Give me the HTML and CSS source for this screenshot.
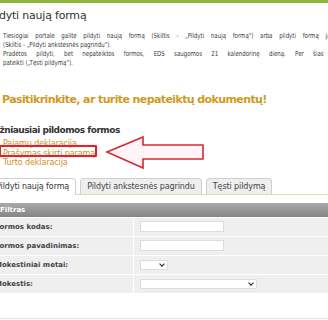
FILE: index.html
```html
<!DOCTYPE html>
<html lang="lt">
<head>
    <meta charset="UTF-8">
    <meta name="viewport" content="width=device-width, initial-scale=1.0">
    <title>Pildyti naują formą</title>
    <link rel="stylesheet" href="styles.css">
</head>
<body>
    <div class="top-bar"></div>
    <div class="page">
        <h1>Pildyti naują formą</h1>

        <div class="intro">
            <span class="line full first">Tiesiogiai portale galite pildyti naują formą (Skiltis - „Pildyti naują formą") arba pildyti formą jau</span>
            <span class="line">(Skiltis - „Pildyti ankstesnės pagrindu").</span>
            <span class="line full third">Pradėtos pildyti, bet nepateiktos formos, EDS saugomos 21 kalendorinę dieną. Per šias dienas</span>
            <span class="line">pateikti („Tęsti pildymą").</span>
        </div>

        <p class="notice">Pasitikrinkite, ar turite nepateiktų dokumentų!</p>

        <div class="popular">
            <h3>Dažniausiai pildomos formos</h3>
            <ul class="popular-list">
                <li><a href="#">Pajamų deklaracija</a></li>
                <li><a href="#">Prašymas skirti paramą</a></li>
                <li><a href="#">Turto deklaracija</a></li>
            </ul>
            <div class="highlight-box"></div>
            <svg class="highlight-arrow" width="110" height="40" viewBox="0 0 110 40">
                <polygon points="2,17 38,2 38,10 98,10 98,24 38,24 38,33" />
            </svg>
        </div>

        <div class="tabs">
            <div class="tab active">Pildyti naują formą</div>
            <div class="tab">Pildyti ankstesnės pagrindu</div>
            <div class="tab">Tęsti pildymą</div>
        </div>

        <div class="filter">
            <div class="filter-head">Filtras</div>
            <div class="filter-row">
                <label>Formos kodas:</label>
                <div class="field"><input type="text" class="input"></div>
            </div>
            <div class="filter-row">
                <label>Formos pavadinimas:</label>
                <div class="field"><input type="text" class="input"></div>
            </div>
            <div class="filter-row">
                <label>Mokestiniai metai:</label>
                <div class="field"><div class="select small"><span class="chev"></span></div></div>
            </div>
            <div class="filter-row">
                <label>Mokestis:</label>
                <div class="field"><div class="select wide"><span class="chev"></span></div></div>
            </div>
        </div>

        <div class="bottom-line"></div>
    </div>
</body>
</html>
```

FILE: styles.css
```css
* {
    margin: 0;
    padding: 0;
    box-sizing: border-box;
}

body {
    background: #fff;
    color: #333;
    font-family: 'DejaVu Sans', Verdana, sans-serif;
    overflow: hidden;
    width: 328px;
    height: 320px;
}

.top-bar {
    height: 3px;
    background: #8db53c;
}

.page {
    margin-left: -13px;
    width: 560px;
}

h1 {
    font-size: 11px;
    font-weight: normal;
    line-height: 14px;
    margin-top: 6px;
    color: #333;
    letter-spacing: -0.2px;
}

.intro {
    margin-top: 9px;
    margin-left: 16px;
    width: 480px;
    font-size: 7px;
    line-height: 9px;
    color: #3a3a3a;
    transform: scaleX(0.78);
    transform-origin: 0 0;
}

.intro .line {
    display: block;
    white-space: nowrap;
}

.intro .full {
    white-space: normal;
    text-align: justify;
    text-align-last: justify;
}

.intro .first {
    width: 424px;
}

.intro .third {
    width: 446px;
}

.notice {
    margin-top: 25px;
    padding-left: 15px;
    font-size: 11px;
    line-height: 14px;
    font-weight: bold;
    color: #cf9a22;
    letter-spacing: -0.6px;
}

.popular {
    position: relative;
    margin-top: 17px;
}

.popular h3 {
    font-size: 9px;
    line-height: 12px;
    font-weight: bold;
    color: #333;
    letter-spacing: -0.5px;
}

.popular-list {
    list-style: none;
    padding-left: 16px;
    margin-top: 3px;
}

.popular-list li {
    font-size: 8px;
    line-height: 9.5px;
    letter-spacing: -0.1px;
}

.popular-list a {
    color: #d0901e;
    text-decoration: none;
}

.highlight-box {
    position: absolute;
    left: 12px;
    top: 21px;
    width: 98px;
    height: 12px;
    border: 2px solid #d8262f;
    border-radius: 1px;
    box-shadow: 0 0 2px rgba(255, 150, 180, 0.6);
}

.highlight-arrow {
    position: absolute;
    left: 118px;
    top: 11px;
    overflow: visible;
}

.highlight-arrow polygon {
    fill: rgba(255, 235, 242, 0.5);
    stroke: #d42a33;
    stroke-width: 1.6;
    stroke-linejoin: miter;
}

.tabs {
    display: flex;
    gap: 4px;
    margin-top: 10px;
    padding-left: 2px;
    border-bottom: 1px solid #d9ddbd;
    height: 17px;
}

.tab {
    font-size: 8px;
    line-height: 15px;
    padding: 0 6px;
    border: 1px solid #cfcfcf;
    border-bottom: none;
    border-radius: 4px 4px 0 0;
    background: #efefef;
    color: #444;
    height: 16px;
    align-self: flex-end;
    letter-spacing: -0.1px;
}

.tab.active {
    background: #fff;
    height: 17px;
    margin-bottom: -1px;
    color: #333;
}

.filter {
    margin-top: 8px;
}

.filter-head {
    height: 14px;
    padding-left: 13px;
    background: linear-gradient(#a9a9a9, #858585);
    color: #fff;
    font-size: 7px;
    font-weight: bold;
    line-height: 14px;
}

.filter-row {
    display: grid;
    grid-template-columns: 146px 1fr;
    gap: 1px;
    border-top: 1px solid #fff;
    height: 19px;
}

.filter-row label {
    background: #efefef;
    font-size: 7px;
    font-weight: bold;
    line-height: 18px;
    padding-left: 8px;
    color: #444;
}

.field {
    background: #efefef;
    padding-left: 6px;
    display: flex;
    align-items: center;
}

.input {
    width: 84px;
    height: 11px;
    border: 1px solid #ddd;
    background: #fff;
}

.select {
    position: relative;
    height: 10px;
    border: 1px solid #ddd;
    background: #fff;
}

.select.small {
    width: 28px;
}

.select.wide {
    width: 117px;
}

.chev {
    position: absolute;
    right: 3px;
    top: 1px;
    width: 4px;
    height: 4px;
    border-right: 1.5px solid #222;
    border-bottom: 1.5px solid #222;
    transform: rotate(45deg);
}

.bottom-line {
    margin-top: 25px;
    height: 1px;
    background: #e2e2e2;
}
```
